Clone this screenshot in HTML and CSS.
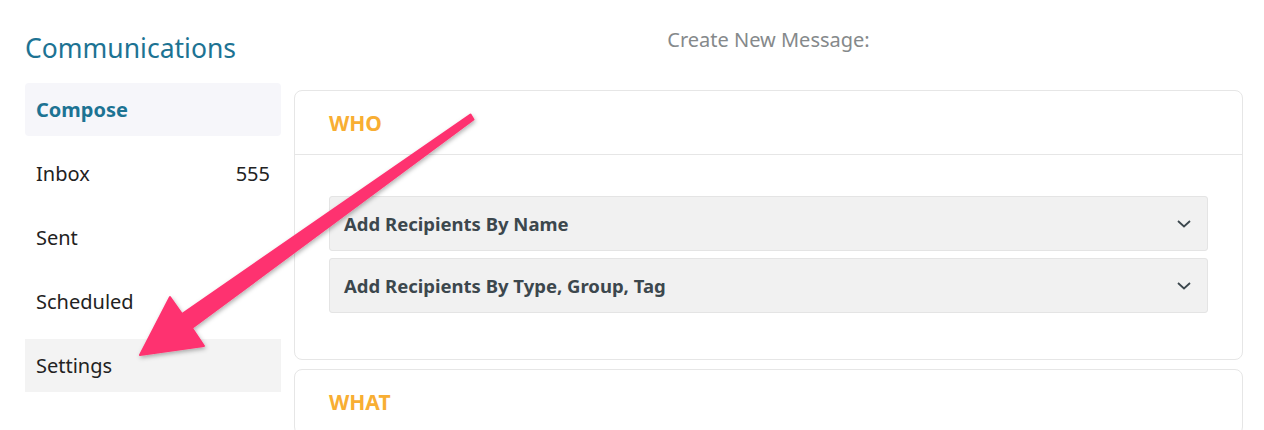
FILE: index.html
```html
<!DOCTYPE html>
<html lang="en">
<head>
  <meta charset="UTF-8" />
  <title>Communications</title>
  <link rel="stylesheet" href="styles.css">
</head>
<body>

<div class="page">
  <aside class="sidebar">
    <h1 class="page-title">Communications</h1>
    <ul class="nav">
      <li class="nav-item active">Compose</li>
      <li class="nav-item">Inbox <span class="count">555</span></li>
      <li class="nav-item">Sent</li>
      <li class="nav-item">Scheduled</li>
      <li class="nav-item hover">Settings</li>
    </ul>
  </aside>

  <main class="content">
    <h2 class="content-title">Create New Message:</h2>

    <section class="card">
      <div class="card-header">WHO</div>
      <div class="card-body">
        <div class="dropdown">
          <span>Add Recipients By Name</span>
          <svg class="chevron" width="14" height="8" viewBox="0 0 14 8"><path d="M1 1l6 5.5L13 1" fill="none" stroke="#3c474d" stroke-width="1.8"/></svg>
        </div>
        <div class="dropdown">
          <span>Add Recipients By Type, Group, Tag</span>
          <svg class="chevron" width="14" height="8" viewBox="0 0 14 8"><path d="M1 1l6 5.5L13 1" fill="none" stroke="#3c474d" stroke-width="1.8"/></svg>
        </div>
      </div>
    </section>

    <section class="card">
      <div class="card-header">WHAT</div>
    </section>
  </main>
</div>

<!-- annotation arrow drawn over the page -->
<svg class="annotation" width="1264" height="430" viewBox="0 0 1264 430">
  <defs>
    <filter id="shadow" x="-10%" y="-10%" width="120%" height="120%">
      <feDropShadow dx="1" dy="2" stdDeviation="2" flood-color="#000" flood-opacity="0.3"/>
    </filter>
  </defs>
  <polygon filter="url(#shadow)" fill="#fe3370" stroke="#fe3370" stroke-width="2" stroke-linejoin="round"
    points="470.5,114.5 182,314 170,297 140,355 204,346 192,328 473.5,119.5"/>
</svg>

</body>
</html>
```

FILE: styles.css
```css
body {
  margin: 0;
  font-family: "Noto Sans", Arial, sans-serif;
  color: #222;
  background: #fff;
}

.page {
  display: flex;
  gap: 13px;
  padding: 0 21px 0 25px;
}

.sidebar { width: 256px; flex-shrink: 0; }

.page-title {
  margin: 30px 0 0;
  font-size: 26.5px;
  font-weight: normal;
  color: #1d7393;
  line-height: 36px;
}

.nav {
  list-style: none;
  margin: 17px 0 0;
  padding: 0;
  display: flex;
  flex-direction: column;
  gap: 11px;
}

.nav-item {
  height: 53px;
  display: flex;
  align-items: center;
  justify-content: space-between;
  padding: 0 11px;
  font-size: 20px;
  color: #222;
  border-radius: 4px;
}

.nav-item.active {
  background: #f6f6fa;
  color: #1d7393;
  font-weight: bold;
}

.nav-item.hover {
  background: #f3f3f3;
  border-radius: 0;
}

.content { flex: 1; }

.content-title {
  margin: 26px 0 0;
  text-align: center;
  font-size: 20px;
  font-weight: normal;
  color: #85898b;
  line-height: 28px;
}

.card {
  margin-top: 36px;
  border: 1px solid #e6e6e6;
  border-radius: 8px;
}

.card + .card { margin-top: 9px; }

.card-header {
  height: 63px;
  display: flex;
  align-items: center;
  padding: 0 34px;
  font-size: 21px;
  font-weight: bold;
  color: #f8ae33;
  border-bottom: 1px solid #e6e6e6;
}

.card-body {
  padding: 41px 34px 46px;
  display: flex;
  flex-direction: column;
  gap: 7px;
}

.dropdown {
  box-sizing: border-box;
  height: 55px;
  display: flex;
  align-items: center;
  justify-content: space-between;
  padding: 0 16px 0 14px;
  background: #f1f1f1;
  border: 1px solid #e4e4e4;
  border-radius: 3px;
  font-size: 18.5px;
  font-weight: bold;
  color: #3c474d;
}

.annotation {
  position: absolute;
  top: 0;
  left: 0;
  pointer-events: none;
}
```
